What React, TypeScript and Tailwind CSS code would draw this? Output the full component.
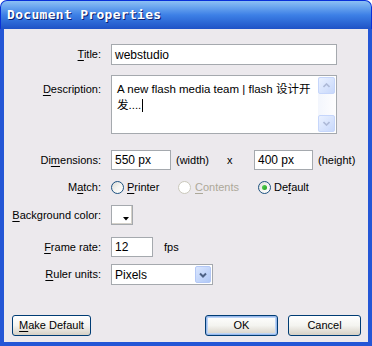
import React from "react";

const U = ({ c }: { c: string }) => <span className="underline underline-offset-[2px]">{c}</span>;

const Label = ({ children, top }: { children: React.ReactNode; top?: boolean }) => (
  <div className={`w-[97px] shrink-0 text-right pr-[0px] ${top ? "self-start pt-[6px]" : ""}`}>{children}</div>
);

const Radio = ({ checked, disabled }: { checked?: boolean; disabled?: boolean }) => (
  <span
    className={`relative inline-flex w-[13px] h-[13px] rounded-full border items-center justify-center ${
      disabled
        ? "border-[#cac8bb] bg-white"
        : "border-[#1c5180] bg-gradient-to-br from-[#dcdcd6] via-[#f4f4f1] to-white"
    }`}
  >
    {checked && (
      <span className="w-[5px] h-[5px] rounded-full bg-gradient-to-br from-[#55d151] to-[#21a121]" />
    )}
  </span>
);

const XPButton = ({ children, w, def }: { children: React.ReactNode; w: string; def?: boolean }) => (
  <div
    className={`${w} h-[21px] rounded-[3px] border border-[#003c74] bg-gradient-to-b from-white via-[#f4f4f0] to-[#d6d0c5] flex items-center justify-center ${
      def ? "shadow-[inset_0_0_0_1px_#98b8ea,inset_0_0_0_2px_#bcd4f6]" : ""
    }`}
  >
    {children}
  </div>
);

export default function App() {
  return (
    <div
      className="w-[372px] h-[346px] flex flex-col text-[11px] text-black overflow-hidden"
      style={{ fontFamily: '"Liberation Sans", "Noto Sans CJK SC", sans-serif' }}
    >
      {/* Title bar */}
      <div className="h-[29px] shrink-0 rounded-t-[7px] border border-b-0 border-[#0831d9] bg-gradient-to-b from-[#8cc0f4] via-[#3d80e6] to-[#1f52c6] flex items-center pl-[6px]">
        <span
          className="text-white font-bold text-[13px] tracking-[0.3px]"
          style={{ fontFamily: '"DejaVu Sans Mono", monospace', textShadow: "1px 1px 0 #0a1e70" }}
        >
          Document Properties
        </span>
      </div>
      {/* Body */}
      <div className="flex-1 bg-[#ece9ed] border-x-[4px] border-b-[4px] border-[#2456d6] flex flex-col">
        {/* Title */}
        <div className="flex items-center gap-[10px] mt-[15px]">
          <Label>
            <U c="T" />itle:
          </Label>
          <div className="w-[226px] h-[21px] bg-white border border-[#a5a9ae] flex items-center px-[3px] text-[12px]">
            webstudio
          </div>
        </div>
        {/* Description */}
        <div className="flex items-center gap-[10px] mt-[10px]">
          <Label top>
            <U c="D" />escription:
          </Label>
          <div className="w-[226px] h-[59px] bg-white border border-[#a5a9ae] flex">
            <div className="flex-1 pl-[5px] pt-[5px] leading-[16px] text-[11.5px] whitespace-nowrap overflow-hidden">
              <div>A new flash media team | flash 设计开</div>
              <div className="flex items-center">
                发....<span className="inline-block w-px h-[13px] bg-black ml-[1px]" />
              </div>
            </div>
            <div className="w-[17px] shrink-0 my-[1px] mr-[1px] bg-gradient-to-r from-[#f3f6fd] to-[#fdfdfe] flex flex-col justify-between">
              <div className="h-[17px] rounded-[2px] border border-[#c6d6fb] bg-gradient-to-br from-[#eaf1ff] to-[#c8d8fb] flex items-center justify-center">
                <svg width="7" height="5" viewBox="0 0 7 5"><path d="M0.5 4 L3.5 1 L6.5 4" stroke="#aebad8" strokeWidth="1.6" fill="none" /></svg>
              </div>
              <div className="h-[17px] rounded-[2px] border border-[#c6d6fb] bg-gradient-to-br from-[#eaf1ff] to-[#c8d8fb] flex items-center justify-center">
                <svg width="7" height="5" viewBox="0 0 7 5"><path d="M0.5 1 L3.5 4 L6.5 1" stroke="#aebad8" strokeWidth="1.6" fill="none" /></svg>
              </div>
            </div>
          </div>
        </div>
        {/* Dimensions */}
        <div className="flex items-center gap-[10px] mt-[16px]">
          <Label>
            Di<U c="m" />ensions:
          </Label>
          <div className="flex items-center">
            <div className="w-[60px] h-[20px] bg-white border border-[#a5a9ae] flex items-center px-[3px] text-[12px]">550 px</div>
            <span className="w-[53px] pl-[5px]">(width)</span>
            <span className="w-[30px] pl-[3px]">x</span>
            <div className="w-[59px] h-[20px] bg-white border border-[#a5a9ae] flex items-center px-[3px] text-[12px]">400 px</div>
            <span className="pl-[5px]">(height)</span>
          </div>
        </div>
        {/* Match */}
        <div className="flex items-center gap-[10px] mt-[7px] h-[20px]">
          <Label>
            M<U c="a" />tch:
          </Label>
          <div className="flex items-center">
            <div className="w-[67px] flex items-center gap-[3px]">
              <Radio />
              <span>
                <U c="P" />rinter
              </span>
            </div>
            <div className="w-[80px] flex items-center gap-[4px] text-[#aca899]">
              <Radio disabled />
              <span>
                <U c="C" />ontents
              </span>
            </div>
            <div className="flex items-center gap-[3px]">
              <Radio checked />
              <span>
                De<U c="f" />ault
              </span>
            </div>
          </div>
        </div>
        {/* Background color */}
        <div className="flex items-center gap-[10px] mt-[8px]">
          <Label>
            <U c="B" />ackground color:
          </Label>
          <div className="relative w-[22px] h-[20px] bg-white border border-[#a5a9ae] shadow-[inset_-1px_-1px_0_#d4d0c8]">
            <svg className="absolute right-[3px] bottom-[3px]" width="6" height="4" viewBox="0 0 6 4">
              <path d="M0 0 H6 L3 3.5 Z" fill="#000" />
            </svg>
          </div>
        </div>
        {/* Frame rate */}
        <div className="flex items-center gap-[10px] mt-[12px]">
          <Label>
            <U c="F" />rame rate:
          </Label>
          <div className="w-[42px] h-[20px] bg-white border border-[#a5a9ae] flex items-center px-[3px] text-[12px]">12</div>
          <span className="ml-[1px]">fps</span>
        </div>
        {/* Ruler units */}
        <div className="flex items-center gap-[10px] mt-[7px]">
          <Label>
            <U c="R" />uler units:
          </Label>
          <div className="w-[102px] h-[21px] bg-white border border-[#a5a9ae] flex items-center">
            <span className="flex-1 px-[3px] text-[12px]">Pixels</span>
            <div className="w-[16px] h-[17px] mr-[1px] rounded-[2px] border border-[#b4c8f6] bg-gradient-to-br from-[#dae6fe] to-[#b0c8f6] flex items-center justify-center">
              <svg width="8" height="6" viewBox="0 0 8 6"><path d="M1 1.5 L4 4.5 L7 1.5" stroke="#4d6185" strokeWidth="2" fill="none" /></svg>
            </div>
          </div>
        </div>
        {/* Buttons */}
        <div className="flex items-center mt-[30px] pl-[8px]">
          <XPButton w="w-[79px]">
            <span>
              <U c="M" />ake Default
            </span>
          </XPButton>
          <div className="ml-[114px]">
            <XPButton w="w-[73px]" def>
              OK
            </XPButton>
          </div>
          <div className="ml-[10px]">
            <XPButton w="w-[73px]">Cancel</XPButton>
          </div>
        </div>
      </div>
    </div>
  );
}
